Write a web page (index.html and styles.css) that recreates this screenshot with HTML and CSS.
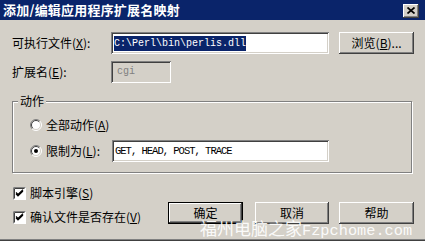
FILE: index.html
```html
<!DOCTYPE html>
<html lang="zh-CN">
<head>
    <meta charset="UTF-8">
    <title>添加/编辑应用程序扩展名映射</title>
    <link rel="stylesheet" href="styles.css">
</head>
<body>
    <div class="dialog">
        <div class="title-bar">
            <span class="title">添加/编辑应用程序扩展名映射</span>
            <span class="close-btn">
                <svg width="8" height="7" viewBox="0 0 8 7"><path d="M0.5 0.5L7.5 6.5M7.5 0.5L0.5 6.5" stroke="#000" stroke-width="1.7"/></svg>
            </span>
        </div>
        <div class="content">
            <div class="row row-first">
                <span class="label">可执行文件(<u>X</u>):</span>
                <span class="field field-exe"><span class="selected">C:\Perl\bin\perlis.dll</span></span>
                <span class="button button-browse">浏览(<u>B</u>)...</span>
            </div>
            <div class="row">
                <span class="label">扩展名(<u>E</u>):</span>
                <span class="field field-ext">cgi</span>
            </div>

            <div class="group">
                <span class="legend">动作</span>
                <div class="option">
                    <svg class="radio" width="12" height="12" viewBox="0 0 12 12">
                        <circle cx="6" cy="6" r="5" fill="#fff"/>
                        <path d="M2.1 9.9A5.5 5.5 0 0 1 9.9 2.1" fill="none" stroke="#808080"/>
                        <path d="M9.9 2.1A5.5 5.5 0 0 1 2.1 9.9" fill="none" stroke="#fff"/>
                        <path d="M2.8 9.2A4.5 4.5 0 0 1 9.2 2.8" fill="none" stroke="#404040"/>
                        <path d="M9.2 2.8A4.5 4.5 0 0 1 2.8 9.2" fill="none" stroke="#d4d0c8"/>
                    </svg>
                    <span>全部动作(<u>A</u>)</span>
                </div>
                <div class="option">
                    <svg class="radio" width="12" height="12" viewBox="0 0 12 12">
                        <circle cx="6" cy="6" r="5" fill="#fff"/>
                        <path d="M2.1 9.9A5.5 5.5 0 0 1 9.9 2.1" fill="none" stroke="#808080"/>
                        <path d="M9.9 2.1A5.5 5.5 0 0 1 2.1 9.9" fill="none" stroke="#fff"/>
                        <path d="M2.8 9.2A4.5 4.5 0 0 1 9.2 2.8" fill="none" stroke="#404040"/>
                        <path d="M9.2 2.8A4.5 4.5 0 0 1 2.8 9.2" fill="none" stroke="#d4d0c8"/>
                        <circle cx="6" cy="6" r="2" fill="#000"/>
                    </svg>
                    <span class="option-label">限制为(<u>L</u>):</span>
                    <span class="field field-methods">GET, HEAD, POST, TRACE</span>
                </div>
            </div>

            <div class="bottom">
                <div class="checks">
                    <div class="check">
                        <svg class="checkbox" width="13" height="13" viewBox="0 0 13 13">
                            <rect x="0" y="0" width="13" height="13" fill="#fff"/>
                            <path d="M0.5 12.5V0.5H12.5" fill="none" stroke="#808080"/>
                            <path d="M1.5 11.5V1.5H11.5" fill="none" stroke="#404040"/>
                            <path d="M3 5.5L5 7.5L10 2.8M3 6.8L5 8.8L10 4.1" fill="none" stroke="#000" stroke-width="1.2"/>
                        </svg>
                        <span>脚本引擎(<u>S</u>)</span>
                    </div>
                    <div class="check">
                        <svg class="checkbox" width="13" height="13" viewBox="0 0 13 13">
                            <rect x="0" y="0" width="13" height="13" fill="#fff"/>
                            <path d="M0.5 12.5V0.5H12.5" fill="none" stroke="#808080"/>
                            <path d="M1.5 11.5V1.5H11.5" fill="none" stroke="#404040"/>
                            <path d="M3 5.5L5 7.5L10 2.8M3 6.8L5 8.8L10 4.1" fill="none" stroke="#000" stroke-width="1.2"/>
                        </svg>
                        <span>确认文件是否存在(<u>V</u>)</span>
                    </div>
                </div>
                <div class="actions">
                    <span class="button button-ok">确定</span>
                    <span class="button button-cancel">取消</span>
                    <span class="button button-help">帮助</span>
                </div>
            </div>
        </div>
        <div class="watermark">福州电脑之家<span class="wm-latin">Fzpchome.com</span></div>
    </div>
</body>
</html>
```

FILE: styles.css
```css
*{
    margin: 0;
    padding: 0;
    box-sizing: border-box;
}
body{
    background: #d4d0c8;
    font-family: "Noto Sans CJK SC", sans-serif;
    font-size: 12px;
    line-height: 14px;
    color: #000;
}
u{
    text-decoration: underline;
    text-underline-offset: 1px;
}
.dialog{
    width: 425px;
    height: 241px;
    background: #d4d0c8;
    position: relative;
    overflow: hidden;
    box-shadow: inset 0 -1px #404040, inset 0 -2px #808080;
}
.title-bar{
    height: 20px;
    background: #0a246a;
    display: flex;
    align-items: center;
    justify-content: space-between;
    padding: 0 6px 0 3px;
}
.title{
    color: #fff;
    font-weight: bold;
    font-size: 13px;
    line-height: 20px;
    letter-spacing: 0.2px;
}
.close-btn{
    width: 16px;
    height: 14px;
    margin-top: 1px;
    background: #d4d0c8;
    display: flex;
    align-items: center;
    justify-content: center;
    box-shadow: inset -1px -1px #404040, inset 1px 1px #fff, inset -2px -2px #808080;
}
.content{
    padding: 0 11px 0 12px;
}
.row{
    display: flex;
    align-items: center;
    height: 22px;
    margin-top: 7px;
}
.row-first{
    margin-top: 12px;
}
.label{
    width: 99px;
    flex: 0 0 99px;
}
.field{
    height: 22px;
    background: #fff;
    padding: 0 3px;
    display: flex;
    align-items: center;
    font-family: "Liberation Mono", monospace;
    font-size: 10px;
    white-space: nowrap;
    box-shadow: inset 1px 1px #808080, inset -1px -1px #fff, inset 2px 2px #404040, inset -2px -2px #d4d0c8;
}
.field-exe{
    width: 219px;
}
.selected{
    background: #0a246a;
    color: #fff;
    line-height: 15px;
}
.field-ext{
    width: 60px;
    background: #d4d0c8;
    color: #808080;
    padding-left: 6px;
}
.button{
    height: 22px;
    width: 75px;
    display: flex;
    align-items: center;
    justify-content: center;
    background: #d4d0c8;
    box-shadow: inset -1px -1px #404040, inset 1px 1px #fff, inset -2px -2px #808080;
}
.button-browse{
    margin-left: 10px;
}
.group{
    margin: 18px 2px 0 0;
    border: 1px solid #808080;
    box-shadow: inset 1px 1px #fff, 1px 1px #fff;
    padding: 12px 0 10px 17px;
}
.legend{
    display: block;
    width: max-content;
    margin: -20px 0 6px -12px;
    padding: 0 2px;
    background: #d4d0c8;
}
.option{
    display: flex;
    align-items: center;
    height: 22px;
}
.option + .option{
    margin-top: 4px;
}
.radio{
    flex: 0 0 12px;
    margin-right: 4px;
}
.option-label{
    width: 66px;
}
.field-methods{
    width: 217px;
    font-size: 10.5px;
    letter-spacing: -1px;
}
.bottom{
    display: flex;
    margin-top: 9px;
}
.checks{
    flex: 0 0 156px;
    display: flex;
    flex-direction: column;
    gap: 2px;
}
.check{
    display: flex;
    align-items: center;
    height: 22px;
    padding-left: 1px;
}
.checkbox{
    flex: 0 0 13px;
    margin-right: 4px;
}
.actions{
    display: flex;
    margin-top: 20px;
    height: 22px;
}
.button-ok{
    border: 1px solid #000;
}
.button-cancel{
    width: 74px;
    margin-left: 12px;
}
.button-help{
    margin-left: 10px;
}
.watermark{
    position: absolute;
    left: 200px;
    top: 218px;
    color: rgba(255,255,255,.92);
    font-size: 17px;
    line-height: 20px;
    white-space: nowrap;
}
.wm-latin{
    font-family: "Liberation Mono", monospace;
    font-size: 15.3px;
}
```
